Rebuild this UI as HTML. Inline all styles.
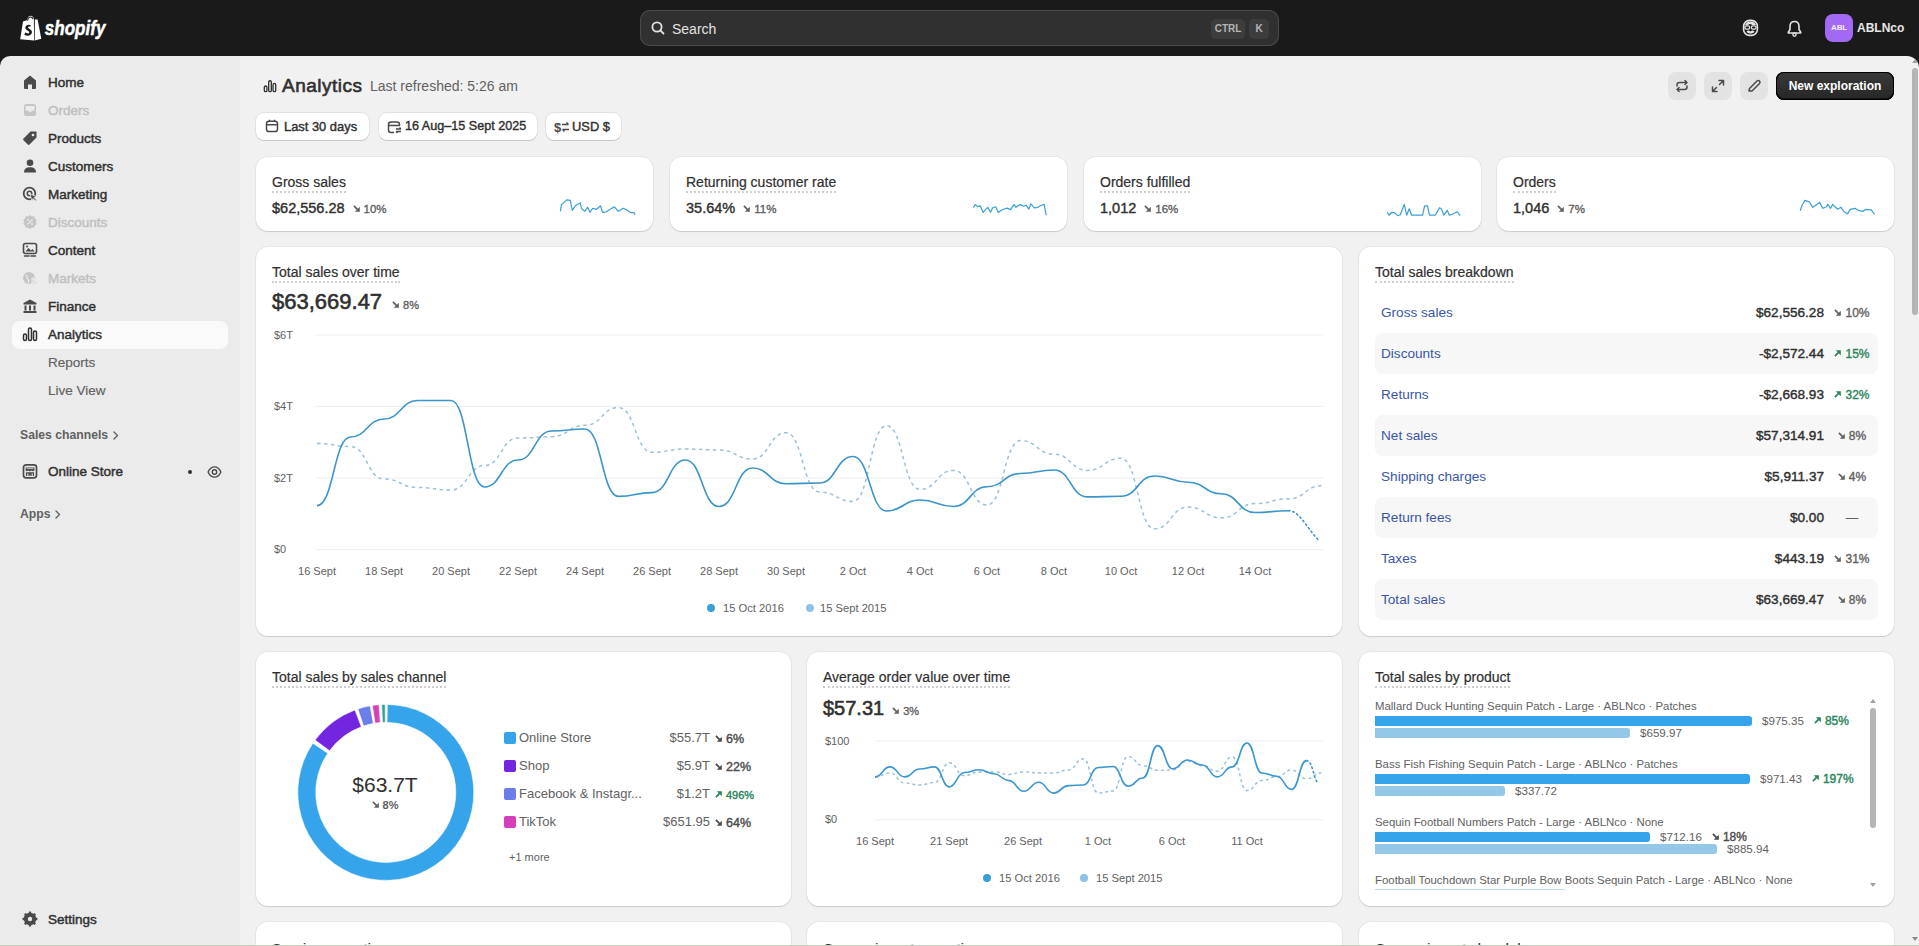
<!DOCTYPE html><html><head><meta charset="utf-8"><style>
*{margin:0;padding:0;box-sizing:border-box}
html,body{width:1919px;height:946px;overflow:hidden;background:#1a1a1a;font-family:"Liberation Sans", sans-serif;color:#303030}
.abs{position:absolute}
.sb{font-weight:normal!important;-webkit-text-stroke:0.45px currentColor}
#side{position:absolute;left:0;top:56px;width:240px;height:890px;background:#ebebeb;border-top-left-radius:10px}
#main{position:absolute;left:240px;top:56px;width:1679px;height:890px;background:#f1f1f1;border-top-right-radius:12px}
.nav{position:absolute;left:12px;width:216px;height:28px;border-radius:8px;font-size:13.5px;font-weight:normal;-webkit-text-stroke:0.45px currentColor;line-height:28px;padding-left:36px;color:#303030;white-space:nowrap}
.nav.dis{color:#c0c0c0}
.nav.sub{font-weight:normal;color:#616161;-webkit-text-stroke:0.15px currentColor}
.nav.act{background:#fafafa}
.nav svg{position:absolute;left:10px;top:5px}
.card{position:absolute;background:#fff;border-radius:12px;box-shadow:0 1px 0 0 rgba(26,26,26,.07),0 0 0 1px rgba(0,0,0,.04), 0 1px 2px rgba(0,0,0,.06)}
.ttl{position:absolute;font-size:14px;line-height:17px;white-space:nowrap;-webkit-text-stroke:0.2px #303030;border-bottom:2px dotted #cfcfcf;color:#303030}
.val{position:absolute;font-size:14.5px;font-weight:normal;-webkit-text-stroke:0.4px #303030;white-space:nowrap;line-height:18px}
.chg{font-size:11.5px;font-weight:normal;color:#616161;margin-left:8px;-webkit-text-stroke:0.35px currentColor}
.up,.brow .c.up,span.up{color:#29845a!important}
.pill{position:absolute;height:27px;top:113px;background:#fff;border-radius:8px;box-shadow:0 1px 0 0 rgba(0,0,0,.12),0 0 0 1px rgba(0,0,0,.06);font-size:12.9px;font-weight:normal;-webkit-text-stroke:0.4px #303030;line-height:27px;white-space:nowrap;color:#303030}
.ax{position:absolute;font-size:11px;color:#616161;white-space:nowrap;line-height:14px}
.brow{position:absolute;left:16px;width:503px;height:41px;border-radius:8px;font-size:13.6px;line-height:42px}
.brow.alt{background:#f7f7f7}
.brow .l{position:absolute;left:6px;color:#2c4fa3;color:#3a56a6}
.brow .v{position:absolute;right:54px;font-weight:normal;-webkit-text-stroke:0.4px #303030;color:#303030}
.brow .c{position:absolute;right:4px;width:44px;text-align:center;font-size:12px;font-weight:normal;-webkit-text-stroke:0.35px currentColor;color:#616161}
</style></head><body>
<svg class="abs" style="left:0;top:0" width="120" height="56" viewBox="0 0 120 56">
<path d="M20.2,39.2 L23,21.6 C24.5,21 26,20.5 27,20.2 C27.6,17.2 29,15.8 30.6,15.8 C32,15.8 33.2,16.8 33.8,18.3 L34.2,40.6 Z" fill="#fff"/>
<path d="M34.8,19.4 L37.6,19.6 L41.3,38.8 L34.8,40.6 Z" fill="#fff"/>
<path d="M27.6,20.6 C28,18.2 29.2,17 30.6,17 C31.8,17 32.6,17.8 33,19" fill="none" stroke="#1a1a1a" stroke-width="1.1"/>
<path d="M30.8,25.2 C29.4,24.2 25.6,24.4 25.4,27.4 C25.2,30.4 29.4,30.4 29.2,32.4 C29.1,33.6 27.4,33.8 25.2,32.6 L24.4,34.8 C27.4,36.4 31.8,35.8 31.9,32.2 C32,29 27.9,29 28,27.3 C28.1,26.3 29.4,26.2 30.2,26.8 Z" fill="#1a1a1a"/>
<text x="44.8" y="34.8" textLength="60.6" lengthAdjust="spacingAndGlyphs" font-family="Liberation Sans" font-weight="bold" font-style="italic" font-size="19.6" fill="#fff" stroke="#fff" stroke-width="0.5">shopify</text>
</svg>
<div class="abs" style="left:640px;top:10px;width:639px;height:36px;background:#303030;border-radius:10px;box-shadow:inset 0 0 0 1px #4a4a4a">
<svg class="abs" style="left:11px;top:11px" width="14" height="14" viewBox="0 0 14 14"><circle cx="6" cy="6" r="4.6" fill="none" stroke="#e3e3e3" stroke-width="1.8"/><path d="M9.3,9.3 L12.5,12.5" stroke="#e3e3e3" stroke-width="1.8" stroke-linecap="round"/></svg>
<div class="abs" style="left:32px;top:1px;line-height:36px;font-size:14px;color:#e3e3e3">Search</div>
<div class="abs" style="left:571px;top:9px;width:34px;height:20px;background:#3d3d3d;border-radius:5px;font-size:10px;font-weight:bold;color:#b5b5b5;text-align:center;line-height:20px">CTRL</div>
<div class="abs" style="left:609px;top:9px;width:20px;height:20px;background:#3d3d3d;border-radius:5px;font-size:10px;font-weight:bold;color:#b5b5b5;text-align:center;line-height:20px">K</div>
</div>
<svg class="abs" style="left:1742px;top:19px" width="17" height="18" viewBox="0 0 17 18">
<rect x="1.6" y="1.4" width="13.8" height="15" rx="6" fill="none" stroke="#e3e3e3" stroke-width="1.6"/>
<path d="M3,6 C4,3.5 6,2.5 8.5,2.5 C11,2.5 13,3.5 14,6 L10,6 C9,4.8 7,4.8 6,6 Z" fill="#e3e3e3"/>
<rect x="3" y="6.8" width="4.6" height="3.4" rx="1.4" fill="none" stroke="#e3e3e3" stroke-width="1.3"/><rect x="9.4" y="6.8" width="4.6" height="3.4" rx="1.4" fill="none" stroke="#e3e3e3" stroke-width="1.3"/>
<path d="M4.5,12.2 C6,11 7.5,11.8 8.5,12.4 C9.5,11.8 11,11 12.5,12.2 C12,14 10,14.6 8.5,14.6 C7,14.6 5,14 4.5,12.2 Z" fill="#e3e3e3"/>
</svg>
<svg class="abs" style="left:1787px;top:20px" width="15" height="17" viewBox="0 0 15 17">
<path d="M7.5,1.5 C4.6,1.5 3,3.8 3,6.5 L3,9.5 L1.3,12.2 C1.1,12.6 1.3,13 1.8,13 L13.2,13 C13.7,13 13.9,12.6 13.7,12.2 L12,9.5 L12,6.5 C12,3.8 10.4,1.5 7.5,1.5 Z" fill="none" stroke="#e3e3e3" stroke-width="1.6" stroke-linejoin="round"/>
<circle cx="7.5" cy="14.6" r="1.6" fill="none" stroke="#e3e3e3" stroke-width="1.4"/>
</svg>
<div class="abs" style="left:1825px;top:14px;width:28px;height:28px;background:#a269f4;border-radius:8px;font-size:8px;font-weight:bold;color:#f6ecff;text-align:center;line-height:28px;letter-spacing:-0.2px">ABL</div>
<div class="abs" style="left:1857px;top:14px;line-height:28px;font-size:12px;font-weight:bold;color:#e8e8e8">ABLNco</div>

<div id="side">
<div class="nav " style="top:13px"><svg width="16" height="16" viewBox="0 0 16 16"><path d="M8,1.5 L14,6.5 L14,14 C14,14.5 13.5,15 13,15 L10,15 L10,10.5 L6,10.5 L6,15 L3,15 C2.5,15 2,14.5 2,14 L2,6.5 Z" fill="#4a4a4a"/></svg>Home</div>
<div class="nav dis" style="top:41px"><svg width="16" height="16" viewBox="0 0 16 16"><path d="M2,4 C2,3 3,2 4,2 L12,2 C13,2 14,3 14,4 L14,12 C14,13 13,14 12,14 L4,14 C3,14 2,13 2,12 Z" fill="#c5c5c5"/><path d="M3.5,8.5 L6,8.5 L7,10 L9,10 L10,8.5 L12.5,8.5 L12.5,4 L3.5,4 Z" fill="#ebebeb"/></svg>Orders</div>
<div class="nav " style="top:69px"><svg width="16" height="16" viewBox="0 0 16 16"><path d="M8.5,1.5 L14,1.5 C14.3,1.5 14.5,1.7 14.5,2 L14.5,7.5 L7.5,14.5 C7,15 6.3,15 5.8,14.5 L1.5,10.2 C1,9.7 1,9 1.5,8.5 Z" fill="#4a4a4a"/><circle cx="11" cy="5" r="1.3" fill="#ebebeb"/></svg>Products</div>
<div class="nav " style="top:97px"><svg width="16" height="16" viewBox="0 0 16 16"><circle cx="8" cy="4.8" r="3.3" fill="#4a4a4a"/><path d="M2,14.5 C2,10.5 4.5,9.2 8,9.2 C11.5,9.2 14,10.5 14,14.5 Z" fill="#4a4a4a"/></svg>Customers</div>
<div class="nav " style="top:125px"><svg width="16" height="16" viewBox="0 0 16 16"><circle cx="7.5" cy="7.5" r="5.8" fill="none" stroke="#4a4a4a" stroke-width="1.8"/><circle cx="7.5" cy="7.5" r="2.2" fill="none" stroke="#4a4a4a" stroke-width="1.6"/><path d="M8,8 L14.5,10.5 L12,11.5 L14.5,14 L13.5,15 L11,12.5 L10,15 Z" fill="#4a4a4a" stroke="#ebebeb" stroke-width="0.8"/></svg>Marketing</div>
<div class="nav dis" style="top:153px"><svg width="16" height="16" viewBox="0 0 16 16"><path d="M8,1 L9.8,2.5 L12.2,2.3 L12.7,4.6 L14.8,5.8 L13.8,8 L14.8,10.2 L12.7,11.4 L12.2,13.7 L9.8,13.5 L8,15 L6.2,13.5 L3.8,13.7 L3.3,11.4 L1.2,10.2 L2.2,8 L1.2,5.8 L3.3,4.6 L3.8,2.3 L6.2,2.5 Z" fill="#c5c5c5"/><path d="M5.5,10.5 L10.5,5.5" stroke="#ebebeb" stroke-width="1.3"/><circle cx="6" cy="6" r="1" fill="#ebebeb"/><circle cx="10" cy="10" r="1" fill="#ebebeb"/></svg>Discounts</div>
<div class="nav " style="top:181px"><svg width="16" height="16" viewBox="0 0 16 16"><rect x="1.5" y="1.5" width="13" height="10" rx="2" fill="none" stroke="#4a4a4a" stroke-width="1.6"/><path d="M3.5,9.5 L6.5,6 L9,8.5 L10.5,7 L12.5,9.5 Z" fill="#4a4a4a"/><circle cx="5" cy="4.5" r="1" fill="#4a4a4a"/><path d="M2.5,14 L7,14 M9,14 L13.5,14" stroke="#4a4a4a" stroke-width="1.6" stroke-linecap="round"/></svg>Content</div>
<div class="nav dis" style="top:209px"><svg width="16" height="16" viewBox="0 0 16 16"><circle cx="7" cy="8" r="6" fill="#c5c5c5"/><path d="M4,5 C5,6 6,6.5 5,8.5 C7,9 7,11 6,13" stroke="#ebebeb" stroke-width="1.2" fill="none"/><text x="9" y="14" font-size="9" font-weight="bold" fill="#c5c5c5" stroke="#ebebeb" stroke-width="0.6">$</text></svg>Markets</div>
<div class="nav " style="top:237px"><svg width="16" height="16" viewBox="0 0 16 16"><path d="M8,1.5 L14.5,5 L14.5,6.5 L1.5,6.5 L1.5,5 Z" fill="#4a4a4a"/><rect x="2.5" y="7.5" width="2" height="5" fill="#4a4a4a"/><rect x="7" y="7.5" width="2" height="5" fill="#4a4a4a"/><rect x="11.5" y="7.5" width="2" height="5" fill="#4a4a4a"/><rect x="1.5" y="13" width="13" height="2" rx="0.5" fill="#4a4a4a"/></svg>Finance</div>
<div class="nav act" style="top:265px"><svg width="16" height="16" viewBox="0 0 16 16"><rect x="1.5" y="8" width="3" height="6.5" rx="1.5" fill="none" stroke="#303030" stroke-width="1.5"/><rect x="6.5" y="2" width="3" height="12.5" rx="1.5" fill="none" stroke="#303030" stroke-width="1.5"/><rect x="11.5" y="5" width="3" height="9.5" rx="1.5" fill="none" stroke="#303030" stroke-width="1.5"/></svg>Analytics</div>
<div class="nav sub" style="top:293px">Reports</div>
<div class="nav sub" style="top:321px">Live View</div>
<div class="abs" style="left:20px;top:371px;font-size:12.2px;font-weight:bold;color:#616161;line-height:16px">Sales channels<svg style="position:absolute;left:92px;top:4px" width="8" height="9" viewBox="0 0 8 9"><path d="M2,1 L5.5,4.5 L2,8" fill="none" stroke="#616161" stroke-width="1.4" stroke-linecap="round" stroke-linejoin="round"/></svg></div>
<div class="nav" style="top:402px"><svg width="16" height="16" viewBox="0 0 16 16"><rect x="1.5" y="1.8" width="13" height="13" rx="2.6" fill="none" stroke="#4a4a4a" stroke-width="1.7"/><path d="M3.6,4.4 L12.4,4.4 L12.4,7.6 C11.5,8.3 10.6,8.3 9.8,7.6 C9,8.3 7,8.3 6.2,7.6 C5.4,8.3 4.5,8.3 3.6,7.6 Z" fill="#4a4a4a"/><path d="M4.6,5.6 L11.4,5.6" stroke="#ebebeb" stroke-width="0.7"/><path d="M4.6,13 L4.6,9.8 L11.4,9.8 L11.4,13 M7,13 L7,11.2 L9,11.2 L9,13" fill="none" stroke="#4a4a4a" stroke-width="1.3"/></svg>Online Store
<span class="abs" style="left:176px;top:12px;width:4px;height:4px;border-radius:2px;background:#303030"></span>
<svg class="abs" style="left:195px;top:8px" width="15" height="12" viewBox="0 0 17 14"><path d="M1,7 C3,2.5 6,1 8.5,1 C11,1 14,2.5 16,7 C14,11.5 11,13 8.5,13 C6,13 3,11.5 1,7 Z" fill="none" stroke="#4a4a4a" stroke-width="1.6"/><circle cx="8.5" cy="7" r="2.6" fill="none" stroke="#4a4a4a" stroke-width="1.6"/></svg>
</div>
<div class="abs" style="left:20px;top:449px;font-size:12.2px;font-weight:bold;color:#616161;line-height:16px;margin-top:1px">Apps<svg style="position:absolute;left:34px;top:4px" width="8" height="9" viewBox="0 0 8 9"><path d="M2,1 L5.5,4.5 L2,8" fill="none" stroke="#616161" stroke-width="1.4" stroke-linecap="round" stroke-linejoin="round"/></svg></div>
<div class="nav" style="top:850px"><svg width="16" height="16" viewBox="0 0 16 16"><path d="M6.8,1 L9.2,1 L9.6,3 L11.2,3.8 L13,2.7 L14.6,4.4 L13.4,6.1 L14,7.8 L15.5,8.2 L15.5,10.5 L13.7,11 L13,12.5 L14,14.2 L12.3,15.8 L10.6,14.7 L9,15.3 L8.6,17 L6.6,17" fill="none"/><circle cx="8" cy="8" r="6.2" fill="#4a4a4a"/><g fill="#4a4a4a"><rect x="6.8" y="0.6" width="2.4" height="3" rx="0.5"/><rect x="6.8" y="12.4" width="2.4" height="3" rx="0.5"/><rect x="0.6" y="6.8" width="3" height="2.4" rx="0.5"/><rect x="12.4" y="6.8" width="3" height="2.4" rx="0.5"/><rect x="6.8" y="0.6" width="2.4" height="3" rx="0.5" transform="rotate(45 8 8)"/><rect x="6.8" y="12.4" width="2.4" height="3" rx="0.5" transform="rotate(45 8 8)"/><rect x="0.6" y="6.8" width="3" height="2.4" rx="0.5" transform="rotate(45 8 8)"/><rect x="12.4" y="6.8" width="3" height="2.4" rx="0.5" transform="rotate(45 8 8)"/></g><circle cx="8" cy="8" r="2.2" fill="#ebebeb"/></svg>Settings</div>
</div>
<div id="main"></div>
<svg class="abs" style="left:263px;top:79px" width="14" height="14" viewBox="0 0 16 16"><rect x="1.5" y="8" width="3" height="6.5" rx="1.5" fill="none" stroke="#303030" stroke-width="1.5"/><rect x="6.5" y="2" width="3" height="12.5" rx="1.5" fill="none" stroke="#303030" stroke-width="1.5"/><rect x="11.5" y="5" width="3" height="9.5" rx="1.5" fill="none" stroke="#303030" stroke-width="1.5"/></svg>
<div class="abs" style="left:282px;top:74px;font-size:19px;letter-spacing:0.5px;font-weight:normal;-webkit-text-stroke:0.6px #303030;line-height:24px;color:#303030">Analytics</div>
<div class="abs" style="left:370px;top:77px;font-size:14px;line-height:18px;color:#616161">Last refreshed: 5:26 am</div>
<div class="abs" style="left:1668px;top:72px;width:28px;height:28px;border-radius:8px;background:#e3e3e3"><svg class="abs" style="left:6px;top:6px" width="16" height="16" viewBox="0 0 16 16"><path d="M3,8 L3,7 C3,5.5 4,4.5 5.5,4.5 L13,4.5 M11,2.5 L13,4.5 L11,6.5 M13,8 L13,9 C13,10.5 12,11.5 10.5,11.5 L3,11.5 M5,9.5 L3,11.5 L5,13.5" fill="none" stroke="#4a4a4a" stroke-width="1.5" stroke-linecap="round" stroke-linejoin="round"/></svg></div>
<div class="abs" style="left:1704px;top:72px;width:28px;height:28px;border-radius:8px;background:#e3e3e3"><svg class="abs" style="left:6px;top:6px" width="16" height="16" viewBox="0 0 16 16"><path d="M9,2.5 L13.5,2.5 L13.5,7 M13.5,2.5 L9.5,6.5 M7,13.5 L2.5,13.5 L2.5,9 M2.5,13.5 L6.5,9.5" fill="none" stroke="#4a4a4a" stroke-width="1.5" stroke-linecap="round" stroke-linejoin="round"/></svg></div>
<div class="abs" style="left:1740px;top:72px;width:28px;height:28px;border-radius:8px;background:#e3e3e3"><svg class="abs" style="left:6px;top:6px" width="16" height="16" viewBox="0 0 16 16"><path d="M3,13 L3.5,10.5 L11,3 C11.8,2.2 12.8,2.2 13.5,3 C14.2,3.7 14.2,4.7 13.5,5.5 L6,13 Z" fill="none" stroke="#4a4a4a" stroke-width="1.5" stroke-linejoin="round"/></svg></div>
<div class="abs" style="left:1776px;top:72px;width:118px;height:28px;border-radius:8px;background:linear-gradient(#3a3a3a,#262626);box-shadow:0 0 0 1px #000 inset, 0 -1px 0 1px #111 inset;color:#fff;font-size:12px;font-weight:bold;line-height:28px;text-align:center">New exploration</div>
<div class="pill" style="left:256px;width:113px"><svg class="abs" style="left:9px;top:6px" width="14" height="14" viewBox="0 0 14 14"><rect x="1.5" y="2.2" width="11" height="10.3" rx="2.6" fill="none" stroke="#4a4a4a" stroke-width="1.5"/><path d="M1.5,5.8 L12.5,5.8 M4.5,0.8 L4.5,3 M9.5,0.8 L9.5,3" stroke="#4a4a4a" stroke-width="1.5"/></svg><span class="abs" style="left:28px">Last 30 days</span></div>
<div class="pill" style="left:379px;width:158px"><svg class="abs" style="left:8px;top:7px" width="15" height="14" viewBox="0 0 15 14"><path d="M7,12.5 L4,12.5 C2.6,12.5 1.5,11.4 1.5,10 L1.5,4.5 C1.5,3.1 2.6,2 4,2 L10,2 C11.4,2 12.5,3.1 12.5,4.5 L12.5,6" fill="none" stroke="#4a4a4a" stroke-width="1.5"/><path d="M1.5,5.5 L12.5,5.5" stroke="#4a4a4a" stroke-width="1.5"/><path d="M9,9 L14,9 M12.5,7.5 L14,9 M9,11.5 L14,11.5 M10.5,13 L9,11.5" stroke="#4a4a4a" stroke-width="1.3" fill="none"/></svg><span class="abs" style="left:26px;font-size:12.6px">16 Aug–15 Sept 2025</span></div>
<div class="pill" style="left:546px;width:75px"><svg class="abs" style="left:8px;top:7px" width="16" height="14" viewBox="0 0 16 14"><text x="0" y="12" font-size="13" font-weight="bold" fill="#4a4a4a" font-family="Liberation Sans">$</text><path d="M8,4.5 L14.5,4.5 M12.5,2.5 L14.5,4.5 M8.5,9.5 L15,9.5 M10.5,11.5 L8.5,9.5" stroke="#4a4a4a" stroke-width="1.4" fill="none"/></svg><span class="abs" style="left:26px">USD $</span></div>
<div class="card" style="left:256px;top:157px;width:397px;height:74px">
<div class="ttl" style="left:16px;top:17px">Gross sales</div>
<div class="val" style="left:16px;top:42px">$62,556.28<span class="chg"><svg style="display:inline-block;vertical-align:1px;margin-right:4px" width="7" height="7" viewBox="0 0 7 7"><path d="M0.9,0.9 L4.6,4.6" stroke="currentColor" stroke-width="1.7"/><path d="M6.8,1.8 L6.8,6.8 L1.8,6.8 Z" fill="currentColor"/></svg>10%</span></div>
<svg class="abs" style="left:0;top:0" width="397" height="74" viewBox="256 157 397 74"><path d="M560.4,211.3 L561.4,204.9 L562.9,203.4 L566.8,199.9 L570.3,200.4 L572.3,210.3 L575.2,205.8 L580.2,202.9 L581.7,208.8 L584.7,211.3 L587.6,207.3 L590.1,212.3 L592.6,208.3 L596.5,209.3 L600.5,205.8 L602.5,212.3 L606.4,211.8 L610.9,208.8 L614.4,206.8 L618.3,211.3 L623.3,208.3 L627.2,210.3 L630.2,212.3 L634.2,212.8 L635.1,214.8" fill="none" stroke="#3a9fd6" stroke-width="1.2" stroke-linejoin="round"/></svg>
</div>
<div class="card" style="left:670px;top:157px;width:397px;height:74px">
<div class="ttl" style="left:16px;top:17px">Returning customer rate</div>
<div class="val" style="left:16px;top:42px">35.64%<span class="chg"><svg style="display:inline-block;vertical-align:1px;margin-right:4px" width="7" height="7" viewBox="0 0 7 7"><path d="M0.9,0.9 L4.6,4.6" stroke="currentColor" stroke-width="1.7"/><path d="M6.8,1.8 L6.8,6.8 L1.8,6.8 Z" fill="currentColor"/></svg>11%</span></div>
<svg class="abs" style="left:0;top:0" width="397" height="74" viewBox="670 157 397 74"><path d="M973.2,207.6 L975.4,204.6 L977.4,206.6 L980.3,205.8 L983.1,212.5 L984.8,210.3 L987.8,207.3 L990.5,212.3 L992.7,207.8 L995.7,206.8 L998.2,212.5 L1002.1,209.8 L1007.1,208.1 L1010.5,209.6 L1014.0,204.6 L1016.0,207.3 L1020.0,204.4 L1023.9,206.3 L1026.4,205.3 L1028.9,209.1 L1030.8,203.9 L1034.3,207.8 L1037.8,207.3 L1040.2,205.8 L1044.2,204.4 L1046.2,215.2" fill="none" stroke="#3a9fd6" stroke-width="1.2" stroke-linejoin="round"/></svg>
</div>
<div class="card" style="left:1084px;top:157px;width:397px;height:74px">
<div class="ttl" style="left:16px;top:17px">Orders fulfilled</div>
<div class="val" style="left:16px;top:42px">1,012<span class="chg"><svg style="display:inline-block;vertical-align:1px;margin-right:4px" width="7" height="7" viewBox="0 0 7 7"><path d="M0.9,0.9 L4.6,4.6" stroke="currentColor" stroke-width="1.7"/><path d="M6.8,1.8 L6.8,6.8 L1.8,6.8 Z" fill="currentColor"/></svg>16%</span></div>
<svg class="abs" style="left:0;top:0" width="397" height="74" viewBox="1084 157 397 74"><path d="M1387.4,212.3 L1388.9,215.2 L1391.9,212.3 L1394.9,212.8 L1397.8,215.7 L1400.3,214.8 L1404.3,204.4 L1406.7,215.2 L1409.2,208.8 L1411.7,215.2 L1422.6,215.2 L1424.6,205.8 L1427.5,205.8 L1429.5,215.2 L1435.4,215.2 L1439.4,207.8 L1441.4,208.8 L1443.9,215.2 L1447.3,210.3 L1449.3,215.2 L1452.3,214.3 L1457.2,211.8 L1460.2,215.7" fill="none" stroke="#3a9fd6" stroke-width="1.2" stroke-linejoin="round"/></svg>
</div>
<div class="card" style="left:1497px;top:157px;width:397px;height:74px">
<div class="ttl" style="left:16px;top:17px">Orders</div>
<div class="val" style="left:16px;top:42px">1,046<span class="chg"><svg style="display:inline-block;vertical-align:1px;margin-right:4px" width="7" height="7" viewBox="0 0 7 7"><path d="M0.9,0.9 L4.6,4.6" stroke="currentColor" stroke-width="1.7"/><path d="M6.8,1.8 L6.8,6.8 L1.8,6.8 Z" fill="currentColor"/></svg>7%</span></div>
<svg class="abs" style="left:0;top:0" width="397" height="74" viewBox="1497 157 397 74"><path d="M1800.2,210.8 L1801.9,205.8 L1804.9,200.4 L1809.3,201.9 L1812.8,207.3 L1819.7,202.4 L1822.7,208.3 L1826.7,206.8 L1827.7,204.4 L1830.6,208.3 L1832.6,204.4 L1837.6,209.3 L1841.0,207.3 L1843.5,211.3 L1847.5,213.8 L1850.4,209.3 L1854.9,208.3 L1858.3,210.3 L1863.3,211.3 L1865.8,209.3 L1871.2,209.8 L1874.7,214.5" fill="none" stroke="#3a9fd6" stroke-width="1.2" stroke-linejoin="round"/></svg>
</div>
<div class="card" style="left:256px;top:247px;width:1086px;height:389px">
<div class="ttl" style="left:16px;top:17px">Total sales over time</div>
<div class="abs" style="left:16px;top:42px;font-size:22px;font-weight:normal;-webkit-text-stroke:0.6px #303030;line-height:26px;white-space:nowrap">$63,669.47<span class="chg" style="font-size:11px;margin-left:10px"><svg style="display:inline-block;vertical-align:1px;margin-right:4px" width="7" height="7" viewBox="0 0 7 7"><path d="M0.9,0.9 L4.6,4.6" stroke="currentColor" stroke-width="1.7"/><path d="M6.8,1.8 L6.8,6.8 L1.8,6.8 Z" fill="currentColor"/></svg>8%</span></div>
<svg class="abs" style="left:0;top:0" width="1086" height="389" viewBox="256 247 1086 389"><line x1="315" x2="1323" y1="335.0" y2="335.0" stroke="#efefef" stroke-width="1"/><line x1="315" x2="1323" y1="406.5" y2="406.5" stroke="#efefef" stroke-width="1"/><line x1="315" x2="1323" y1="478.0" y2="478.0" stroke="#efefef" stroke-width="1"/><line x1="315" x2="1323" y1="549.5" y2="549.5" stroke="#efefef" stroke-width="1"/><path d="M317.0,443.4 C333.8,443.4 333.8,446.6 350.5,446.6 C367.2,446.6 367.2,479.0 384.0,479.0 C400.8,479.0 400.8,487.5 417.5,487.5 C434.2,487.5 434.2,490.0 451.0,490.0 C467.8,490.0 467.8,465.6 484.5,465.6 C501.2,465.6 501.2,438.0 518.0,438.0 C534.8,438.0 534.8,436.7 551.5,436.7 C568.2,436.7 568.2,425.3 585.0,425.3 C601.8,425.3 601.8,407.6 618.5,407.6 C635.2,407.6 635.2,452.3 652.0,452.3 C668.8,452.3 668.8,449.0 685.5,449.0 C702.2,449.0 702.2,450.0 719.0,450.0 C735.8,450.0 735.8,459.0 752.5,459.0 C769.2,459.0 769.2,432.7 786.0,432.7 C802.8,432.7 802.8,492.0 819.5,492.0 C836.2,492.0 836.2,501.4 853.0,501.4 C869.8,501.4 869.8,425.7 886.5,425.7 C903.2,425.7 903.2,489.4 920.0,489.4 C936.8,489.4 936.8,470.4 953.5,470.4 C970.2,470.4 970.2,505.0 987.0,505.0 C1003.8,505.0 1003.8,440.6 1020.5,440.6 C1037.2,440.6 1037.2,454.2 1054.0,454.2 C1070.8,454.2 1070.8,470.4 1087.5,470.4 C1104.2,470.4 1104.2,458.2 1121.0,458.2 C1137.8,458.2 1137.8,528.8 1154.5,528.8 C1171.2,528.8 1171.2,507.0 1188.0,507.0 C1204.8,507.0 1204.8,517.8 1221.5,517.8 C1238.2,517.8 1238.2,503.6 1255.0,503.6 C1271.8,503.6 1271.8,498.9 1288.5,498.9 C1305.2,498.9 1305.2,485.7 1322.0,485.7" fill="none" stroke="#9cc0d6" stroke-width="1.5" stroke-dasharray="3.5 3.5"/><path d="M317.0,505.6 C333.8,505.6 333.8,437.0 350.5,437.0 C367.2,437.0 367.2,419.0 384.0,419.0 C400.8,419.0 400.8,400.5 417.5,400.5 C434.2,400.5 434.2,400.5 451.0,400.5 C467.8,400.5 467.8,487.0 484.5,487.0 C501.2,487.0 501.2,460.0 518.0,460.0 C534.8,460.0 534.8,431.0 551.5,431.0 C568.2,431.0 568.2,429.0 585.0,429.0 C601.8,429.0 601.8,496.4 618.5,496.4 C635.2,496.4 635.2,492.6 652.0,492.6 C668.8,492.6 668.8,460.0 685.5,460.0 C702.2,460.0 702.2,506.5 719.0,506.5 C735.8,506.5 735.8,468.0 752.5,468.0 C769.2,468.0 769.2,483.7 786.0,483.7 C802.8,483.7 802.8,483.0 819.5,483.0 C836.2,483.0 836.2,456.5 853.0,456.5 C869.8,456.5 869.8,511.0 886.5,511.0 C903.2,511.0 903.2,500.0 920.0,500.0 C936.8,500.0 936.8,506.5 953.5,506.5 C970.2,506.5 970.2,486.7 987.0,486.7 C1003.8,486.7 1003.8,473.5 1020.5,473.5 C1037.2,473.5 1037.2,470.0 1054.0,470.0 C1070.8,470.0 1070.8,496.9 1087.5,496.9 C1104.2,496.9 1104.2,496.3 1121.0,496.3 C1137.8,496.3 1137.8,476.0 1154.5,476.0 C1171.2,476.0 1171.2,482.2 1188.0,482.2 C1204.8,482.2 1204.8,493.8 1221.5,493.8 C1238.2,493.8 1238.2,512.5 1255.0,512.5 C1271.8,512.5 1271.8,510.7 1288.5,510.7" fill="none" stroke="#3b95cc" stroke-width="1.6"/><path d="" fill="none" stroke="#3b95cc" stroke-width="1.6" stroke-dasharray="1.5 3"/><path d="M1288.5,510.7 C1298.5,509.7 1308.5,530.0 1318.0,539.5" fill="none" stroke="#3b95cc" stroke-width="1.6" stroke-dasharray="1.5 3" stroke-linecap="round"/></svg>
<div class="ax" style="left:18px;top:81px">$6T</div>
<div class="ax" style="left:18px;top:152px">$4T</div>
<div class="ax" style="left:18px;top:224px">$2T</div>
<div class="ax" style="left:18px;top:295px">$0</div>
<div class="ax" style="left:21px;top:317px;width:80px;text-align:center">16 Sept</div>
<div class="ax" style="left:88px;top:317px;width:80px;text-align:center">18 Sept</div>
<div class="ax" style="left:155px;top:317px;width:80px;text-align:center">20 Sept</div>
<div class="ax" style="left:222px;top:317px;width:80px;text-align:center">22 Sept</div>
<div class="ax" style="left:289px;top:317px;width:80px;text-align:center">24 Sept</div>
<div class="ax" style="left:356px;top:317px;width:80px;text-align:center">26 Sept</div>
<div class="ax" style="left:423px;top:317px;width:80px;text-align:center">28 Sept</div>
<div class="ax" style="left:490px;top:317px;width:80px;text-align:center">30 Sept</div>
<div class="ax" style="left:557px;top:317px;width:80px;text-align:center">2 Oct</div>
<div class="ax" style="left:624px;top:317px;width:80px;text-align:center">4 Oct</div>
<div class="ax" style="left:691px;top:317px;width:80px;text-align:center">6 Oct</div>
<div class="ax" style="left:758px;top:317px;width:80px;text-align:center">8 Oct</div>
<div class="ax" style="left:825px;top:317px;width:80px;text-align:center">10 Oct</div>
<div class="ax" style="left:892px;top:317px;width:80px;text-align:center">12 Oct</div>
<div class="ax" style="left:959px;top:317px;width:80px;text-align:center">14 Oct</div>
<div class="abs" style="left:450px;top:354px;width:10px;height:8px"></div>
<div class="ax" style="left:451px;top:354px;font-size:11.2px"><span style="display:inline-block;width:8px;height:8px;border-radius:4px;background:#3a9fd6;margin-right:8px"></span>15 Oct 2016<span style="display:inline-block;width:8px;height:8px;border-radius:4px;background:#8cc3e4;margin:0 6px 0 22px"></span>15 Sept 2015</div>
</div>
<div class="card" style="left:1359px;top:247px;width:535px;height:389px">
<div class="ttl" style="left:16px;top:17px">Total sales breakdown</div>
<div class="brow " style="top:45px"><span class="l">Gross sales</span><span class="v">$62,556.28</span><span class="c "><svg style="display:inline-block;vertical-align:1px;margin-right:4px" width="7" height="7" viewBox="0 0 7 7"><path d="M0.9,0.9 L4.6,4.6" stroke="currentColor" stroke-width="1.7"/><path d="M6.8,1.8 L6.8,6.8 L1.8,6.8 Z" fill="currentColor"/></svg>10%</span></div>
<div class="brow alt" style="top:86px"><span class="l">Discounts</span><span class="v">-$2,572.44</span><span class="c up"><svg style="display:inline-block;vertical-align:1px;margin-right:4px" width="7" height="7" viewBox="0 0 7 7"><path d="M0.9,6.1 L4.6,2.4" stroke="currentColor" stroke-width="1.7"/><path d="M6.8,5.2 L6.8,0.2 L1.8,0.2 Z" fill="currentColor"/></svg>15%</span></div>
<div class="brow " style="top:127px"><span class="l">Returns</span><span class="v">-$2,668.93</span><span class="c up"><svg style="display:inline-block;vertical-align:1px;margin-right:4px" width="7" height="7" viewBox="0 0 7 7"><path d="M0.9,6.1 L4.6,2.4" stroke="currentColor" stroke-width="1.7"/><path d="M6.8,5.2 L6.8,0.2 L1.8,0.2 Z" fill="currentColor"/></svg>32%</span></div>
<div class="brow alt" style="top:168px"><span class="l">Net sales</span><span class="v">$57,314.91</span><span class="c "><svg style="display:inline-block;vertical-align:1px;margin-right:4px" width="7" height="7" viewBox="0 0 7 7"><path d="M0.9,0.9 L4.6,4.6" stroke="currentColor" stroke-width="1.7"/><path d="M6.8,1.8 L6.8,6.8 L1.8,6.8 Z" fill="currentColor"/></svg>8%</span></div>
<div class="brow " style="top:209px"><span class="l">Shipping charges</span><span class="v">$5,911.37</span><span class="c "><svg style="display:inline-block;vertical-align:1px;margin-right:4px" width="7" height="7" viewBox="0 0 7 7"><path d="M0.9,0.9 L4.6,4.6" stroke="currentColor" stroke-width="1.7"/><path d="M6.8,1.8 L6.8,6.8 L1.8,6.8 Z" fill="currentColor"/></svg>4%</span></div>
<div class="brow alt" style="top:250px"><span class="l">Return fees</span><span class="v">$0.00</span><span class="c ">&#8212;</span></div>
<div class="brow " style="top:291px"><span class="l">Taxes</span><span class="v">$443.19</span><span class="c "><svg style="display:inline-block;vertical-align:1px;margin-right:4px" width="7" height="7" viewBox="0 0 7 7"><path d="M0.9,0.9 L4.6,4.6" stroke="currentColor" stroke-width="1.7"/><path d="M6.8,1.8 L6.8,6.8 L1.8,6.8 Z" fill="currentColor"/></svg>31%</span></div>
<div class="brow alt" style="top:332px"><span class="l">Total sales</span><span class="v">$63,669.47</span><span class="c "><svg style="display:inline-block;vertical-align:1px;margin-right:4px" width="7" height="7" viewBox="0 0 7 7"><path d="M0.9,0.9 L4.6,4.6" stroke="currentColor" stroke-width="1.7"/><path d="M6.8,1.8 L6.8,6.8 L1.8,6.8 Z" fill="currentColor"/></svg>8%</span></div>
</div>
<div class="card" style="left:256px;top:652px;width:535px;height:254px">
<div class="ttl" style="left:16px;top:17px">Total sales by sales channel</div>
<svg class="abs" style="left:0;top:0" width="535" height="254" viewBox="256 652 535 254"><path d="M387.34,704.41 A88.00,88.00 0 1 1 312.84,743.19 L327.77,753.26 A70.00,70.00 0 1 0 387.02,722.41 Z" fill="#36a4ea" stroke="#fff" stroke-width="0.6" stroke-linejoin="round"/><path d="M315.06,740.06 A88.00,88.00 0 0 1 354.98,709.97 L361.29,726.83 A70.00,70.00 0 0 0 329.53,750.76 Z" fill="#7325e0" stroke="#fff" stroke-width="0.6" stroke-linejoin="round"/><path d="M357.88,708.95 A88.00,88.00 0 0 1 370.07,705.82 L373.28,723.53 A70.00,70.00 0 0 0 363.59,726.02 Z" fill="#6b7de9" stroke="#fff" stroke-width="0.6" stroke-linejoin="round"/><path d="M372.34,705.44 A88.00,88.00 0 0 1 378.90,704.67 L380.31,722.62 A70.00,70.00 0 0 0 375.09,723.22 Z" fill="#d63fb8" stroke="#fff" stroke-width="0.6" stroke-linejoin="round"/><path d="M381.65,704.50 A88.00,88.00 0 0 1 385.19,704.40 L385.31,722.40 A70.00,70.00 0 0 0 382.50,722.48 Z" fill="#2ea39a" stroke="#fff" stroke-width="0.6" stroke-linejoin="round"/></svg>
<div class="abs" style="left:69px;top:121px;width:120px;text-align:center;font-size:21px;line-height:24px;color:#303030">$63.7T</div>
<div class="abs" style="left:69px;top:146px;width:120px;text-align:center;font-size:11px;font-weight:bold;line-height:14px;color:#616161"><svg style="display:inline-block;vertical-align:1px;margin-right:4px" width="7" height="7" viewBox="0 0 7 7"><path d="M0.9,0.9 L4.6,4.6" stroke="currentColor" stroke-width="1.7"/><path d="M6.8,1.8 L6.8,6.8 L1.8,6.8 Z" fill="currentColor"/></svg>8%</div>
<div class="abs" style="left:248px;top:80px;width:12px;height:12px;border-radius:2px;background:#36a4ea"></div>
<div class="abs" style="left:263px;top:78px;font-size:13px;line-height:16px;color:#616161;white-space:nowrap">Online Store</div>
<div class="abs" style="left:354px;top:78px;width:100px;text-align:right;font-size:13px;line-height:16px;color:#616161;white-space:nowrap">$55.7T</div>
<div class="abs " style="left:459px;top:79px;font-size:12.5px;font-weight:normal;-webkit-text-stroke:0.4px currentColor;line-height:16px;color:#4a4a4a;white-space:nowrap"><svg style="display:inline-block;vertical-align:1px;margin-right:4px" width="7" height="7" viewBox="0 0 7 7"><path d="M0.9,0.9 L4.6,4.6" stroke="currentColor" stroke-width="1.7"/><path d="M6.8,1.8 L6.8,6.8 L1.8,6.8 Z" fill="currentColor"/></svg>6%</div>
<div class="abs" style="left:248px;top:108px;width:12px;height:12px;border-radius:2px;background:#7325e0"></div>
<div class="abs" style="left:263px;top:106px;font-size:13px;line-height:16px;color:#616161;white-space:nowrap">Shop</div>
<div class="abs" style="left:354px;top:106px;width:100px;text-align:right;font-size:13px;line-height:16px;color:#616161;white-space:nowrap">$5.9T</div>
<div class="abs " style="left:459px;top:107px;font-size:12.5px;font-weight:normal;-webkit-text-stroke:0.4px currentColor;line-height:16px;color:#4a4a4a;white-space:nowrap"><svg style="display:inline-block;vertical-align:1px;margin-right:4px" width="7" height="7" viewBox="0 0 7 7"><path d="M0.9,0.9 L4.6,4.6" stroke="currentColor" stroke-width="1.7"/><path d="M6.8,1.8 L6.8,6.8 L1.8,6.8 Z" fill="currentColor"/></svg>22%</div>
<div class="abs" style="left:248px;top:136px;width:12px;height:12px;border-radius:2px;background:#6b7de9"></div>
<div class="abs" style="left:263px;top:134px;font-size:13px;line-height:16px;color:#616161;white-space:nowrap">Facebook &amp; Instagr...</div>
<div class="abs" style="left:354px;top:134px;width:100px;text-align:right;font-size:13px;line-height:16px;color:#616161;white-space:nowrap">$1.2T</div>
<div class="abs up" style="left:459px;top:135px;font-size:11px;font-weight:normal;-webkit-text-stroke:0.4px currentColor;line-height:16px;color:#4a4a4a;white-space:nowrap"><svg style="display:inline-block;vertical-align:1px;margin-right:4px" width="7" height="7" viewBox="0 0 7 7"><path d="M0.9,6.1 L4.6,2.4" stroke="currentColor" stroke-width="1.7"/><path d="M6.8,5.2 L6.8,0.2 L1.8,0.2 Z" fill="currentColor"/></svg>496%</div>
<div class="abs" style="left:248px;top:164px;width:12px;height:12px;border-radius:2px;background:#d63fb8"></div>
<div class="abs" style="left:263px;top:162px;font-size:13px;line-height:16px;color:#616161;white-space:nowrap">TikTok</div>
<div class="abs" style="left:354px;top:162px;width:100px;text-align:right;font-size:13px;line-height:16px;color:#616161;white-space:nowrap">$651.95</div>
<div class="abs " style="left:459px;top:163px;font-size:12.5px;font-weight:normal;-webkit-text-stroke:0.4px currentColor;line-height:16px;color:#4a4a4a;white-space:nowrap"><svg style="display:inline-block;vertical-align:1px;margin-right:4px" width="7" height="7" viewBox="0 0 7 7"><path d="M0.9,0.9 L4.6,4.6" stroke="currentColor" stroke-width="1.7"/><path d="M6.8,1.8 L6.8,6.8 L1.8,6.8 Z" fill="currentColor"/></svg>64%</div>
<div class="abs" style="left:253px;top:198px;font-size:11px;line-height:14px;color:#616161">+1 more</div>
</div>
<div class="card" style="left:807px;top:652px;width:535px;height:254px">
<div class="ttl" style="left:16px;top:17px">Average order value over time</div>
<div class="abs" style="left:16px;top:43px;font-size:20px;font-weight:normal;-webkit-text-stroke:0.6px #303030;line-height:26px;white-space:nowrap">$57.31<span class="chg" style="font-size:11px;margin-left:8px"><svg style="display:inline-block;vertical-align:1px;margin-right:4px" width="7" height="7" viewBox="0 0 7 7"><path d="M0.9,0.9 L4.6,4.6" stroke="currentColor" stroke-width="1.7"/><path d="M6.8,1.8 L6.8,6.8 L1.8,6.8 Z" fill="currentColor"/></svg>3%</span></div>
<svg class="abs" style="left:0;top:0" width="535" height="254" viewBox="807 652 535 254"><line x1="875" x2="1323" y1="741.0" y2="741.0" stroke="#efefef" stroke-width="1"/><line x1="875" x2="1323" y1="819.8" y2="819.8" stroke="#efefef" stroke-width="1"/><path d="M875.0,777.0 C882.4,777.0 882.4,773.0 889.9,773.0 C897.3,773.0 897.3,783.0 904.8,783.0 C912.2,783.0 912.2,785.0 919.6,785.0 C927.1,785.0 927.1,782.5 934.5,782.5 C942.0,782.5 942.0,762.8 949.4,762.8 C956.8,762.8 956.8,775.6 964.3,775.6 C971.7,775.6 971.7,771.9 979.2,771.9 C986.6,771.9 986.6,771.9 994.0,771.9 C1001.5,771.9 1001.5,774.4 1008.9,774.4 C1016.4,774.4 1016.4,771.9 1023.8,771.9 C1031.2,771.9 1031.2,773.0 1038.7,773.0 C1046.1,773.0 1046.1,773.0 1053.6,773.0 C1061.0,773.0 1061.0,770.0 1068.4,770.0 C1075.9,770.0 1075.9,758.8 1083.3,758.8 C1090.8,758.8 1090.8,793.0 1098.2,793.0 C1105.6,793.0 1105.6,791.0 1113.1,791.0 C1120.5,791.0 1120.5,756.5 1128.0,756.5 C1135.4,756.5 1135.4,765.6 1142.8,765.6 C1150.3,765.6 1150.3,770.2 1157.7,770.2 C1165.2,770.2 1165.2,770.0 1172.6,770.0 C1180.0,770.0 1180.0,761.0 1187.5,761.0 C1194.9,761.0 1194.9,765.6 1202.4,765.6 C1209.8,765.6 1209.8,771.2 1217.2,771.2 C1224.7,771.2 1224.7,756.9 1232.1,756.9 C1239.6,756.9 1239.6,790.6 1247.0,790.6 C1254.4,790.6 1254.4,780.6 1261.9,780.6 C1269.3,780.6 1269.3,776.9 1276.8,776.9 C1284.2,776.9 1284.2,770.0 1291.6,770.0 C1299.1,770.0 1299.1,778.8 1306.5,778.8 C1314.0,778.8 1314.0,773.0 1321.4,773.0" fill="none" stroke="#9cc0d6" stroke-width="1.5" stroke-dasharray="3 3"/><path d="M875.0,776.9 C882.4,776.9 882.4,766.9 889.9,766.9 C897.3,766.9 897.3,776.9 904.8,776.9 C912.2,776.9 912.2,769.0 919.6,769.0 C927.1,769.0 927.1,766.9 934.5,766.9 C942.0,766.9 942.0,786.9 949.4,786.9 C956.8,786.9 956.8,772.5 964.3,772.5 C971.7,772.5 971.7,769.8 979.2,769.8 C986.6,769.8 986.6,773.8 994.0,773.8 C1001.5,773.8 1001.5,780.6 1008.9,780.6 C1016.4,780.6 1016.4,791.2 1023.8,791.2 C1031.2,791.2 1031.2,782.2 1038.7,782.2 C1046.1,782.2 1046.1,793.1 1053.6,793.1 C1061.0,793.1 1061.0,785.6 1068.4,785.6 C1075.9,785.6 1075.9,785.0 1083.3,785.0 C1090.8,785.0 1090.8,767.5 1098.2,767.5 C1105.6,767.5 1105.6,766.5 1113.1,766.5 C1120.5,766.5 1120.5,786.2 1128.0,786.2 C1135.4,786.2 1135.4,778.0 1142.8,778.0 C1150.3,778.0 1150.3,745.6 1157.7,745.6 C1165.2,745.6 1165.2,768.8 1172.6,768.8 C1180.0,768.8 1180.0,760.0 1187.5,760.0 C1194.9,760.0 1194.9,765.0 1202.4,765.0 C1209.8,765.0 1209.8,776.9 1217.2,776.9 C1224.7,776.9 1224.7,766.9 1232.1,766.9 C1239.6,766.9 1239.6,743.0 1247.0,743.0 C1254.4,743.0 1254.4,773.0 1261.9,773.0 C1269.3,773.0 1269.3,776.2 1276.8,776.2 C1284.2,776.2 1284.2,789.4 1291.6,789.4 C1299.1,789.4 1299.1,760.6 1306.5,760.6" fill="none" stroke="#3a97cf" stroke-width="1.6"/><path d="M1306.5,760.6 C1313.5,760.6 1313.5,783.0 1319.0,783.0" fill="none" stroke="#3a97cf" stroke-width="1.6" stroke-dasharray="1.5 3" stroke-linecap="round"/></svg>
<div class="ax" style="left:18px;top:82px">$100</div>
<div class="ax" style="left:18px;top:160px">$0</div>
<div class="ax" style="left:28px;top:182px;width:80px;text-align:center">16 Sept</div>
<div class="ax" style="left:102px;top:182px;width:80px;text-align:center">21 Sept</div>
<div class="ax" style="left:176px;top:182px;width:80px;text-align:center">26 Sept</div>
<div class="ax" style="left:251px;top:182px;width:80px;text-align:center">1 Oct</div>
<div class="ax" style="left:325px;top:182px;width:80px;text-align:center">6 Oct</div>
<div class="ax" style="left:400px;top:182px;width:80px;text-align:center">11 Oct</div>
<div class="ax" style="left:176px;top:219px;font-size:11.2px"><span style="display:inline-block;width:8px;height:8px;border-radius:4px;background:#3a9fd6;margin-right:8px"></span>15 Oct 2016<span style="display:inline-block;width:8px;height:8px;border-radius:4px;background:#8cc3e4;margin:0 8px 0 20px"></span>15 Sept 2015</div>
</div>
<div class="card" style="left:1359px;top:652px;width:535px;height:254px;overflow:hidden">
<div class="ttl" style="left:16px;top:17px">Total sales by product</div>
<div class="abs" style="left:16px;top:47px;font-size:11.4px;line-height:14px;color:#616161;white-space:nowrap">Mallard Duck Hunting Sequin Patch - Large · ABLNco · Patches</div>
<div class="abs" style="left:16px;top:64px;width:377px;height:10px;background:#36a4ea;border-radius:0 3px 3px 0"></div>
<div class="abs" style="left:16px;top:76px;width:255px;height:10px;background:#94c8e8;border-radius:0 3px 3px 0"></div>
<div class="abs" style="left:403px;top:62px;font-size:11.6px;line-height:14px;color:#616161;white-space:nowrap">$975.35<span class="up" style="font-weight:normal;-webkit-text-stroke:0.4px currentColor;color:#4a4a4a;margin-left:10px;font-size:12px"><svg style="display:inline-block;vertical-align:1px;margin-right:4px" width="7" height="7" viewBox="0 0 7 7"><path d="M0.9,6.1 L4.6,2.4" stroke="currentColor" stroke-width="1.7"/><path d="M6.8,5.2 L6.8,0.2 L1.8,0.2 Z" fill="currentColor"/></svg>85%</span></div>
<div class="abs" style="left:281px;top:74px;font-size:11.6px;line-height:14px;color:#616161;white-space:nowrap">$659.97</div>
<div class="abs" style="left:16px;top:105px;font-size:11.4px;line-height:14px;color:#616161;white-space:nowrap">Bass Fish Fishing Sequin Patch - Large · ABLNco · Patches</div>
<div class="abs" style="left:16px;top:122px;width:375px;height:10px;background:#36a4ea;border-radius:0 3px 3px 0"></div>
<div class="abs" style="left:16px;top:134px;width:130px;height:10px;background:#94c8e8;border-radius:0 3px 3px 0"></div>
<div class="abs" style="left:401px;top:120px;font-size:11.6px;line-height:14px;color:#616161;white-space:nowrap">$971.43<span class="up" style="font-weight:normal;-webkit-text-stroke:0.4px currentColor;color:#4a4a4a;margin-left:10px;font-size:12px"><svg style="display:inline-block;vertical-align:1px;margin-right:4px" width="7" height="7" viewBox="0 0 7 7"><path d="M0.9,6.1 L4.6,2.4" stroke="currentColor" stroke-width="1.7"/><path d="M6.8,5.2 L6.8,0.2 L1.8,0.2 Z" fill="currentColor"/></svg>197%</span></div>
<div class="abs" style="left:156px;top:132px;font-size:11.6px;line-height:14px;color:#616161;white-space:nowrap">$337.72</div>
<div class="abs" style="left:16px;top:163px;font-size:11.4px;line-height:14px;color:#616161;white-space:nowrap">Sequin Football Numbers Patch - Large · ABLNco · None</div>
<div class="abs" style="left:16px;top:180px;width:275px;height:10px;background:#36a4ea;border-radius:0 3px 3px 0"></div>
<div class="abs" style="left:16px;top:192px;width:342px;height:10px;background:#94c8e8;border-radius:0 3px 3px 0"></div>
<div class="abs" style="left:301px;top:178px;font-size:11.6px;line-height:14px;color:#616161;white-space:nowrap">$712.16<span class="" style="font-weight:normal;-webkit-text-stroke:0.4px currentColor;color:#4a4a4a;margin-left:10px;font-size:12px"><svg style="display:inline-block;vertical-align:1px;margin-right:4px" width="7" height="7" viewBox="0 0 7 7"><path d="M0.9,0.9 L4.6,4.6" stroke="currentColor" stroke-width="1.7"/><path d="M6.8,1.8 L6.8,6.8 L1.8,6.8 Z" fill="currentColor"/></svg>18%</span></div>
<div class="abs" style="left:368px;top:190px;font-size:11.6px;line-height:14px;color:#616161;white-space:nowrap">$885.94</div>
<div class="abs" style="left:16px;top:221px;font-size:11.4px;line-height:14px;color:#616161;white-space:nowrap">Football Touchdown Star Purple Bow Boots Sequin Patch - Large · ABLNco · None</div>
<div class="abs" style="left:16px;top:237px;width:190px;height:1px;background:#bcdcf0"></div>
<div class="abs" style="left:511px;top:56px;width:6px;height:120px;border-radius:3px;background:#b5b5b5"></div>
<div class="abs" style="left:511px;top:47px;width:0;height:0;border-left:3px solid transparent;border-right:3px solid transparent;border-bottom:4px solid #a0a0a0"></div>
<div class="abs" style="left:511px;top:231px;width:0;height:0;border-left:3px solid transparent;border-right:3px solid transparent;border-top:4px solid #a0a0a0"></div>
</div>
<div class="card" style="left:256px;top:922px;width:535px;height:254px"><div class="ttl" style="left:16px;top:19px">Sessions over time</div></div>
<div class="card" style="left:807px;top:922px;width:535px;height:254px"><div class="ttl" style="left:16px;top:19px">Conversion rate over time</div></div>
<div class="card" style="left:1359px;top:922px;width:535px;height:254px"><div class="ttl" style="left:16px;top:19px">Conversion rate breakdown</div></div>
<div class="abs" style="left:1912px;top:68px;width:6px;height:247px;border-radius:3px;background:#b5b5b5"></div>
<div class="abs" style="left:0;top:945px;width:1919px;height:1px;background:#c9ccc0"></div>
<div class="abs" style="left:1912px;top:59px;width:0;height:0;border-left:3px solid transparent;border-right:3px solid transparent;border-bottom:4px solid #a3a3a3"></div>
<div class="abs" style="left:1912px;top:937px;width:0;height:0;border-left:3px solid transparent;border-right:3px solid transparent;border-top:4px solid #8a8a8a"></div>
</body></html>
